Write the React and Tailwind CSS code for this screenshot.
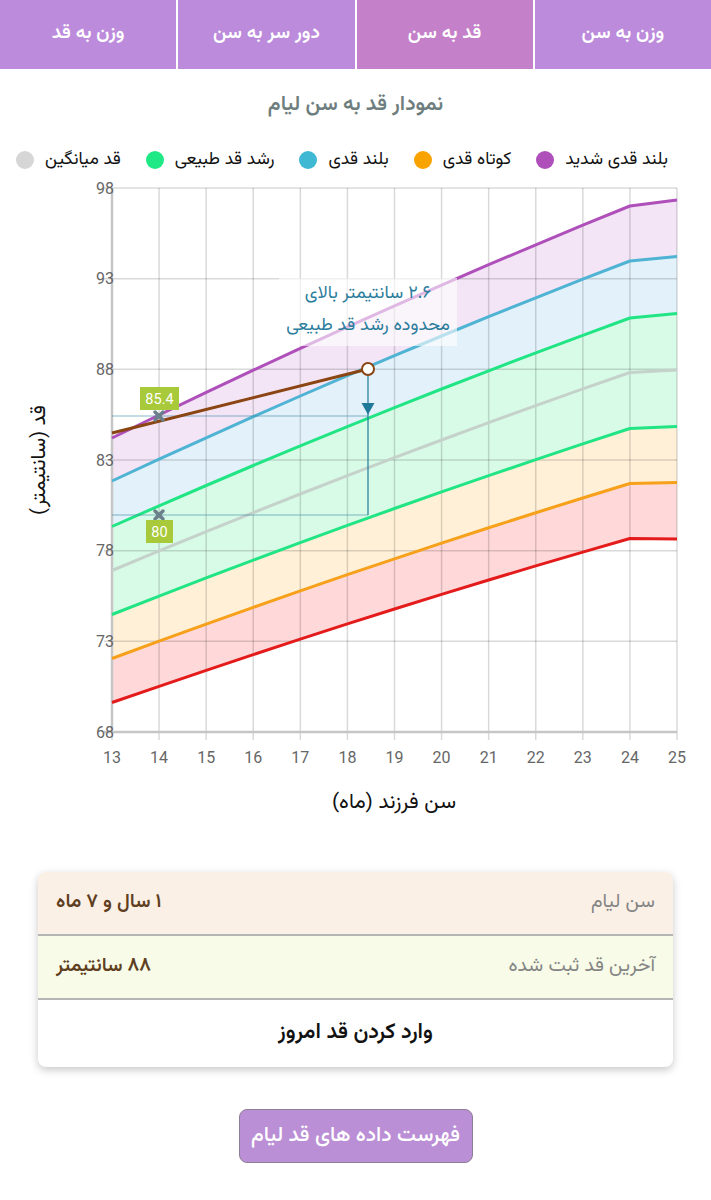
import React from "react";

const X = (m) => 112 + ((m - 13) * 565) / 12;

const curves = [
  { y13: 438, y24: 206, y25: 200, color: "#ae4fba" },
  { y13: 481, y24: 261, y25: 256.5, color: "#4fb3d3" },
  { y13: 526.5, y24: 318, y25: 313.5, color: "#21e584" },
  { y13: 570.5, y24: 372.5, y25: 370, color: "#c5d1cb" },
  { y13: 614.5, y24: 428.5, y25: 426.5, color: "#21e584" },
  { y13: 658.5, y24: 483.5, y25: 482.5, color: "#f7a01a" },
  { y13: 702.5, y24: 538.5, y25: 539, color: "#e41b1b" },
];

function pts(c) {
  const avg = (c.y13 - c.y24) / 11;
  const s0 = avg / 0.91;
  const k = (0.18 * s0) / 22;
  const arr = [];
  for (let t = 0; t <= 11; t++) arr.push([X(13 + t), c.y13 - s0 * t + k * t * t]);
  arr.push([X(25), c.y25]);
  return arr;
}

const P = curves.map(pts);
const toStr = (a) => a.map((p) => `${p[0].toFixed(1)},${p[1].toFixed(1)}`).join(" ");

const fills = [
  { a: 0, b: 1, color: "#f3e4f6" },
  { a: 1, b: 2, color: "#e2f1fa" },
  { a: 2, b: 4, color: "#d8fbe7" },
  { a: 4, b: 5, color: "#fff0d7" },
  { a: 5, b: 6, color: "#ffd8d9" },
];

const yTicks = [
  { v: 98, y: 188 },
  { v: 93, y: 278.7 },
  { v: 88, y: 369.3 },
  { v: 83, y: 460 },
  { v: 78, y: 550.7 },
  { v: 73, y: 641.3 },
  { v: 68, y: 732 },
];

const months = [13, 14, 15, 16, 17, 18, 19, 20, 21, 22, 23, 24, 25];

function Chart() {
  const fa = "'Vazirmatn','Noto Sans Arabic','DejaVu Sans',sans-serif";
  return (
    <svg width="711" height="650" viewBox="0 174 711 650" className="block">
      {fills.map((f, i) => (
        <polygon key={i} points={toStr([...P[f.a], ...[...P[f.b]].reverse()])} fill={f.color} />
      ))}
      {months.map((m) => (
        <line key={m} x1={X(m)} y1={188} x2={X(m)} y2={740} stroke="rgba(0,0,0,0.15)" strokeWidth="1.5" />
      ))}
      {yTicks.map((t) => (
        <line key={t.v} x1={104} y1={t.y} x2={677} y2={t.y} stroke="rgba(0,0,0,0.15)" strokeWidth="1.5" />
      ))}
      <line x1={112} y1={188} x2={112} y2={733} stroke="#c6c6c6" strokeWidth="2.5" />
      <line x1={104} y1={732} x2={677} y2={732} stroke="#c6c6c6" strokeWidth="2.5" />
      {curves.map((c, i) => (
        <polyline key={i} points={toStr(P[i])} fill="none" stroke={c.color} strokeWidth="3" strokeLinejoin="round" />
      ))}
      <line x1={112} y1={416} x2={368} y2={416} stroke="#3b8ba3" strokeOpacity="0.6" strokeWidth="1.2" />
      <line x1={112} y1={515} x2={368} y2={515} stroke="#3b8ba3" strokeOpacity="0.6" strokeWidth="1.2" />
      <line x1={368} y1={369} x2={368} y2={515} stroke="#1f7a99" strokeWidth="1.2" />
      <polygon points="361.5,403 374.5,403 368,414.5" fill="#1f7a99" />
      <line x1={112} y1={433} x2={368} y2={369} stroke="#8b4513" strokeWidth="3" />
      <circle cx={368} cy={369} r={6} fill="#fff" stroke="#8b4513" strokeWidth="2" />
      <g stroke="#6b7f8a" strokeWidth="3.5" strokeLinecap="round">
        <line x1={155} y1={412} x2={163} y2={420} />
        <line x1={163} y1={412} x2={155} y2={420} />
        <line x1={155} y1={511} x2={163} y2={519} />
        <line x1={163} y1={511} x2={155} y2={519} />
      </g>
      <rect x={140} y={387} width={39} height={23} fill="#a8c93a" />
      <text x={159.5} y={404} textAnchor="middle" fontFamily="Roboto" fontSize="14.5" fill="#fff">85.4</text>
      <rect x={146} y={520} width={27} height={23} fill="#a8c93a" />
      <text x={159.5} y={537} textAnchor="middle" fontFamily="Roboto" fontSize="14.5" fill="#fff">80</text>
      <rect x={279} y={278} width={178} height={68} fill="#fff" fillOpacity="0.6" />
      <text x={368} y={298} textAnchor="middle" fontFamily={fa} fontSize="18" fill="#2b7d9c" direction="rtl">۲.۶ سانتیمتر بالای</text>
      <text x={368} y={330} textAnchor="middle" fontFamily={fa} fontSize="18" fill="#2b7d9c" direction="rtl">محدوده رشد قد طبیعی</text>
      {yTicks.map((t) => (
        <text key={t.v} x={96} y={t.y + 5.5} textAnchor="end" fontFamily="Roboto" fontSize="16" fill="#666">{t.v}</text>
      ))}
      {months.map((m) => (
        <text key={m} x={X(m)} y={763} textAnchor="middle" fontFamily="Roboto" fontSize="16" fill="#666">{m}</text>
      ))}
      <text x={394} y={808} textAnchor="middle" fontFamily={fa} fontSize="21" fill="#111" direction="rtl">سن فرزند (ماه)</text>
      <text x={0} y={0} transform="translate(45,460) rotate(-90)" textAnchor="middle" fontFamily={fa} fontSize="20.5" fill="#111" direction="rtl">قد (سانتیمتر)</text>
    </svg>
  );
}

const tabs = ["وزن به سن", "قد به سن", "دور سر به سن", "وزن به قد"];

const legend = [
  { t: "بلند قدی شدید", c: "bg-[#ae4fba]" },
  { t: "کوتاه قدی", c: "bg-[#f9a300]" },
  { t: "بلند قدی", c: "bg-[#3fb8d4]" },
  { t: "رشد قد طبیعی", c: "bg-[#1fe985]" },
  { t: "قد میانگین", c: "bg-[#d6d6d6]" },
];

export default function App() {
  return (
    <div dir="rtl" className="w-[711px] min-h-[1200px] bg-white [font-family:Vazirmatn,'Noto_Sans_Arabic','DejaVu_Sans',sans-serif]">
      <div className="flex h-[69px] gap-[2px] bg-white">
        {tabs.map((t, i) => (
          <div
            key={t}
            className={
              "flex-1 flex items-center justify-center text-white text-[19px] font-semibold " +
              (i === 1 ? "bg-[#c481c9]" : "bg-[#bc8bdc]")
            }
          >
            {t}
          </div>
        ))}
      </div>
      <div className="mt-[21px] text-center text-[21px] leading-[30px] font-semibold text-[#6e7e7e]">نمودار قد به سن لیام</div>
      <div className="mt-[26px] h-[28px] flex items-center justify-between pr-[43px] pl-[16px] text-[17.5px] text-[#111]">
        {legend.map((l) => (
          <div key={l.t} className="flex items-center gap-[11px]">
            <span className="whitespace-nowrap">{l.t}</span>
            <span className={"w-[18px] h-[18px] rounded-full " + l.c}></span>
          </div>
        ))}
      </div>
      <Chart />
      <div className="mt-[48px] mx-[38px] rounded-[8px] overflow-hidden bg-white shadow-[0_3px_8px_rgba(0,0,0,0.22)]">
        <div className="h-[62px] flex items-center justify-between px-[18px] bg-[#fbf0e6]">
          <span className="text-[19.5px] text-[#858585]">سن لیام</span>
          <span className="text-[19.5px] font-semibold text-[#5f3f1f]">۱ سال و ۷ ماه</span>
        </div>
        <div className="h-[2px] bg-[#b5b5b5]"></div>
        <div className="h-[62px] flex items-center justify-between px-[18px] bg-[#f7fbe7]">
          <span className="text-[19.5px] text-[#858585]">آخرین قد ثبت شده</span>
          <span className="text-[19.5px] font-semibold text-[#5f3f1f]">۸۸ سانتیمتر</span>
        </div>
        <div className="h-[2px] bg-[#b5b5b5]"></div>
        <div className="h-[67px] flex items-center justify-center text-[21.5px] font-semibold text-[#111]">وارد کردن قد امروز</div>
      </div>
      <div className="mt-[42px] flex justify-center">
        <div className="w-[234px] h-[54px] flex items-center justify-center rounded-[8px] border border-[#8e7f98] bg-[#bb8fd6] text-white text-[21px] font-medium whitespace-nowrap">
          فهرست داده های قد لیام
        </div>
      </div>
    </div>
  );
}
